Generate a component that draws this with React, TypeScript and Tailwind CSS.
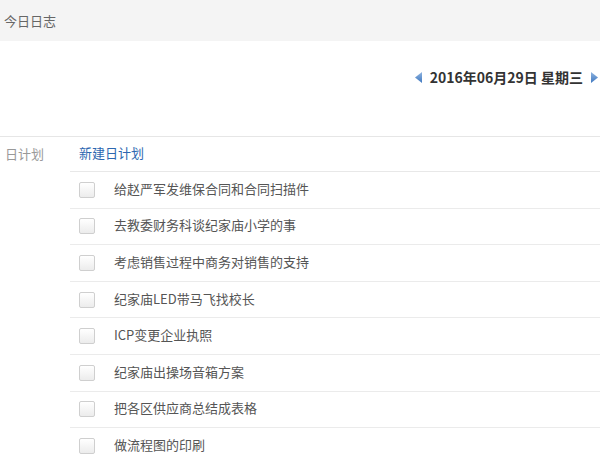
const tasks = [
  '给赵严军发维保合同和合同扫描件',
  '去教委财务科谈纪家庙小学的事',
  '考虑销售过程中商务对销售的支持',
  '纪家庙LED带马飞找校长',
  'ICP变更企业执照',
  '纪家庙出操场音箱方案',
  '把各区供应商总结成表格',
  '做流程图的印刷',
]

function Arrow({ dir }: { dir: 'left' | 'right' }) {
  return (
    <svg width="7" height="11" viewBox="0 0 7 11" className="shrink-0">
      <defs>
        <linearGradient id={`g-${dir}`} x1="0" y1="0" x2="0" y2="1">
          <stop offset="0" stopColor="#8fb4e0" />
          <stop offset="1" stopColor="#3f78c0" />
        </linearGradient>
      </defs>
      {dir === 'left' ? (
        <path d="M7 0 L0 5.5 L7 11 Z" fill={`url(#g-${dir})`} />
      ) : (
        <path d="M0 0 L7 5.5 L0 11 Z" fill={`url(#g-${dir})`} />
      )}
    </svg>
  )
}

export default function App() {
  return (
    <div
      className="w-[600px] h-[464px] overflow-hidden bg-white text-[13px]"
      style={{ fontFamily: '"Noto Sans CJK SC", "Noto Sans", sans-serif' }}
    >
      {/* Header */}
      <div className="h-[41px] bg-[#f4f4f4] flex items-center pl-[4px] text-[#666]">今日日志</div>

      {/* Date switcher */}
      <div className="h-[95px] flex justify-end items-start pt-[26px] pr-[2px]">
        <div className="flex items-center gap-[8px] h-[20px]">
          <Arrow dir="left" />
          <span className="text-[14px] font-bold text-[#333] leading-[20px]">2016年06月29日 星期三</span>
          <Arrow dir="right" />
        </div>
      </div>

      {/* Daily plan */}
      <div className="border-t border-[#e6e6e6] flex">
        <div className="w-[70px] shrink-0 h-[33px] flex items-center pl-[5px] text-[#999]">日计划</div>
        <div className="flex-1">
          <div className="h-[35px] flex items-center pl-[9px] pb-[2px] border-b border-[#e8e8e8]">
            <span className="text-[#2d67b0] cursor-pointer">新建日计划</span>
          </div>
          {tasks.map((t) => (
            <div key={t} className="h-[36.6px] flex items-center pl-[9px] border-b border-[#ebebeb]">
              <span className="w-[16px] h-[16px] rounded-[2px] border border-[#cfcfcf] bg-gradient-to-b from-white to-[#ececec] shrink-0" />
              <span className="ml-[19px] text-[#555] leading-[16px] -mt-[2px]">{t}</span>
            </div>
          ))}
        </div>
      </div>
    </div>
  )
}
